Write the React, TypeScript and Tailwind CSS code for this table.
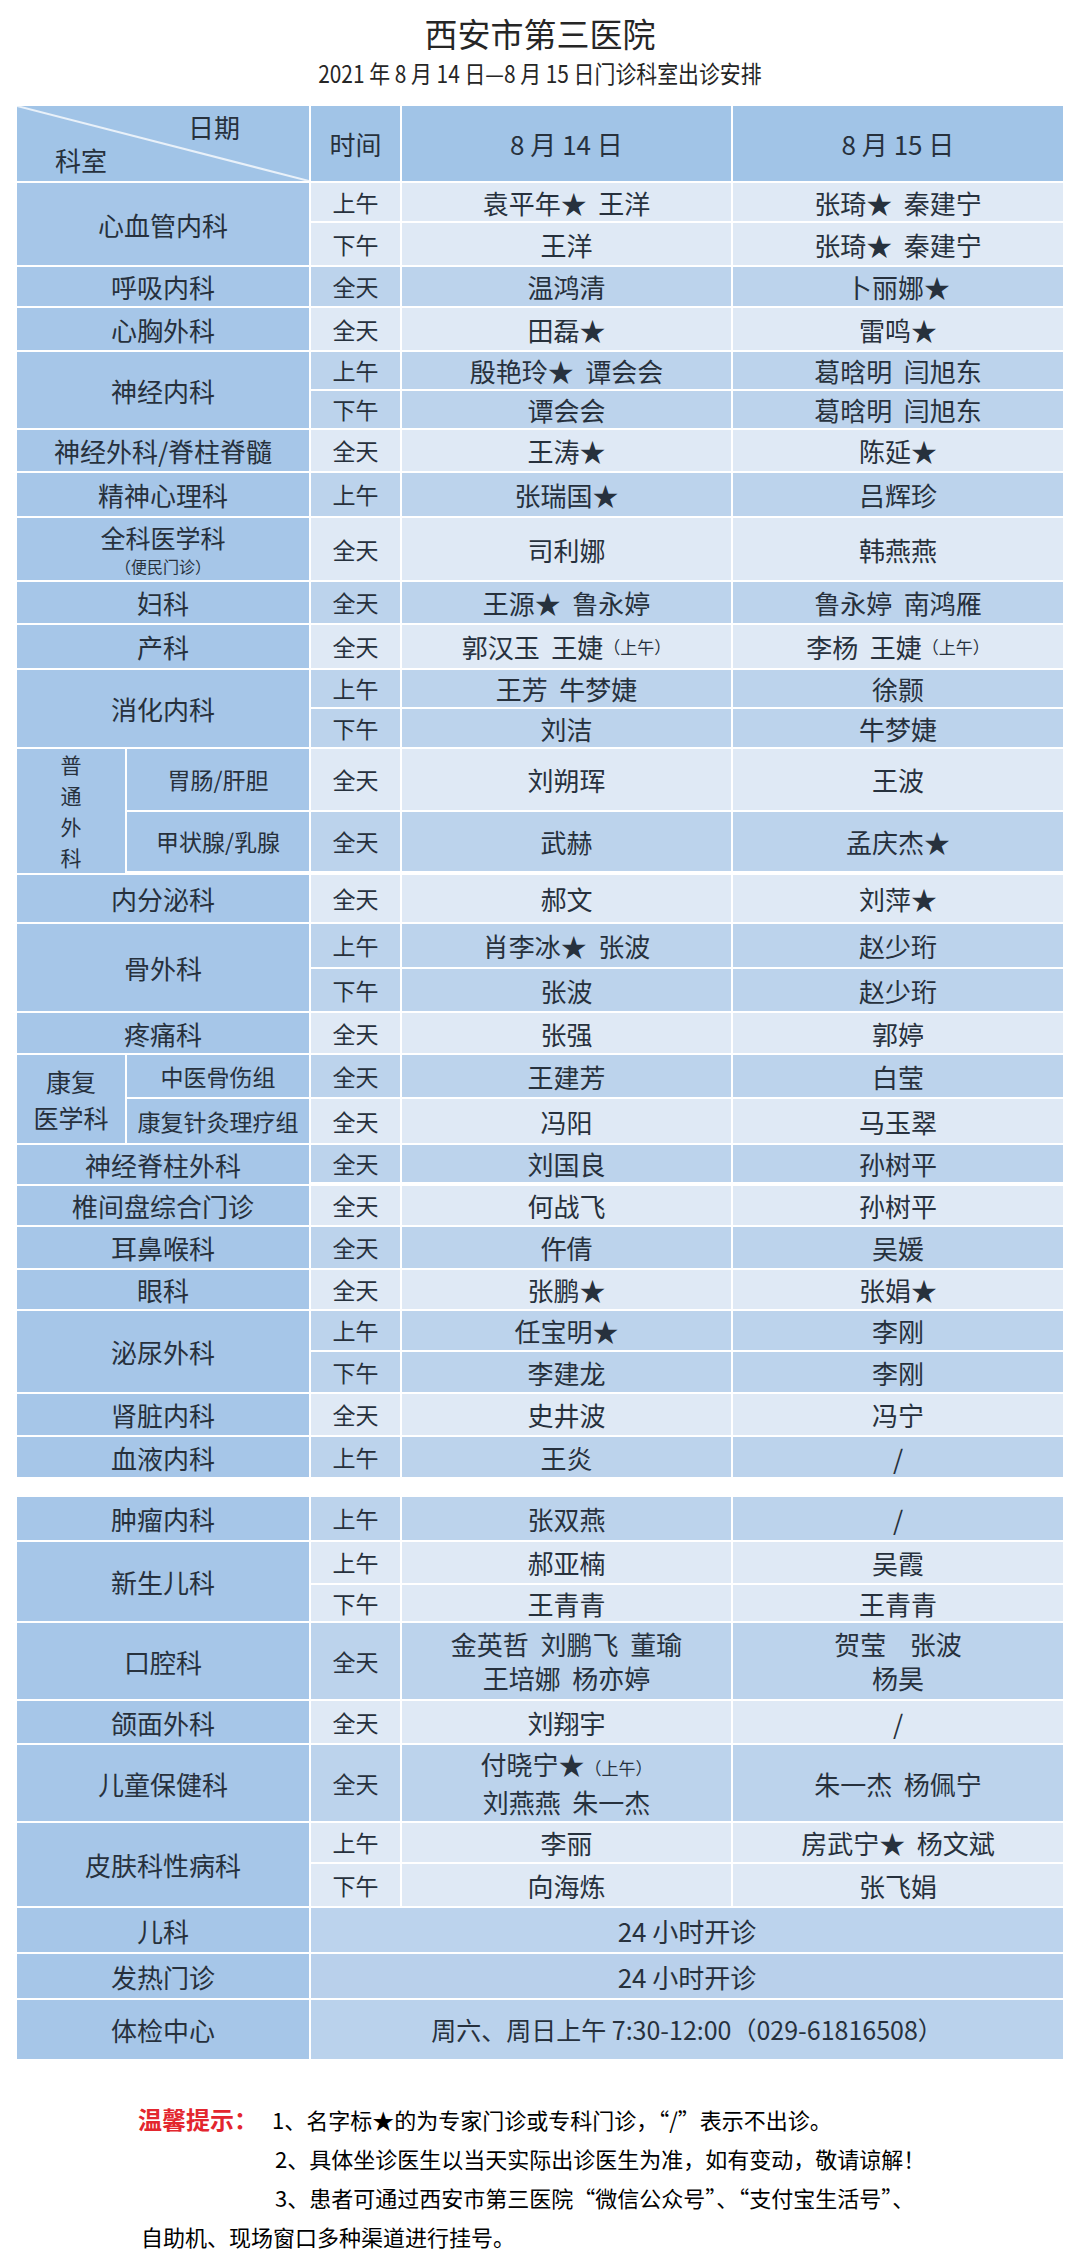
import { ReactNode } from "react";

type Row = {
  t: string;
  a: ReactNode;
  b: ReactNode;
  h: string;
  m: boolean;
  sub?: string;
};

type Block = {
  dept?: ReactNode;
  group?: string[];
  rows: Row[];
};

const LIGHT = "bg-[#dfe9f5]";
const MID = "bg-[#bcd3ec]";
const DEPT = "bg-[#a6c6e8]";

const Small = ({ children }: { children: ReactNode }) => (
  <span className="text-[17px]">{children}</span>
);

const first: Block[] = [
  {
    dept: "心血管内科",
    rows: [
      { t: "上午", a: "袁平年★  王洋", b: "张琦★  秦建宁", h: "h-[38px]", m: false },
      { t: "下午", a: "王洋", b: "张琦★  秦建宁", h: "h-[42px]", m: false },
    ],
  },
  { dept: "呼吸内科", rows: [{ t: "全天", a: "温鸿清", b: "卜丽娜★", h: "h-[39px]", m: true }] },
  { dept: "心胸外科", rows: [{ t: "全天", a: "田磊★", b: "雷鸣★", h: "h-[42px]", m: false }] },
  {
    dept: "神经内科",
    rows: [
      { t: "上午", a: "殷艳玲★  谭会会", b: "葛晗明  闫旭东", h: "h-[37px]", m: true },
      { t: "下午", a: "谭会会", b: "葛晗明  闫旭东", h: "h-[37px]", m: true },
    ],
  },
  { dept: "神经外科/脊柱脊髓", rows: [{ t: "全天", a: "王涛★", b: "陈延★", h: "h-[41px]", m: false }] },
  { dept: "精神心理科", rows: [{ t: "上午", a: "张瑞国★", b: "吕辉珍", h: "h-[43px]", m: true }] },
  {
    dept: (
      <div className="flex flex-col items-center">
        <span className="text-[25px] leading-[33px]">全科医学科</span>
        <span className="text-[16px] leading-[24px]">（便民门诊）</span>
      </div>
    ),
    rows: [{ t: "全天", a: "司利娜", b: "韩燕燕", h: "h-[62px]", m: false }],
  },
  { dept: "妇科", rows: [{ t: "全天", a: "王源★  鲁永婷", b: "鲁永婷  南鸿雁", h: "h-[41px]", m: true }] },
  {
    dept: "产科",
    rows: [
      {
        t: "全天",
        a: (
          <>
            郭汉玉  王婕<Small>（上午）</Small>
          </>
        ),
        b: (
          <>
            李杨  王婕<Small>（上午）</Small>
          </>
        ),
        h: "h-[43px]",
        m: false,
      },
    ],
  },
  {
    dept: "消化内科",
    rows: [
      { t: "上午", a: "王芳  牛梦婕", b: "徐颢", h: "h-[37px]", m: true },
      { t: "下午", a: "刘洁", b: "牛梦婕", h: "h-[38px]", m: true },
    ],
  },
  {
    group: ["普", "通", "外", "科"],
    rows: [
      { sub: "胃肠/肝胆", t: "全天", a: "刘朔珲", b: "王波", h: "h-[61px]", m: false },
      { sub: "甲状腺/乳腺", t: "全天", a: "武赫", b: "孟庆杰★", h: "h-[59px]", m: true },
    ],
  },
  { dept: "内分泌科", rows: [{ t: "全天", a: "郝文", b: "刘萍★", h: "h-[47px]", m: false }] },
  {
    dept: "骨外科",
    rows: [
      { t: "上午", a: "肖李冰★  张波", b: "赵少珩", h: "h-[43px]", m: true },
      { t: "下午", a: "张波", b: "赵少珩", h: "h-[42px]", m: true },
    ],
  },
  { dept: "疼痛科", rows: [{ t: "全天", a: "张强", b: "郭婷", h: "h-[40px]", m: false }] },
  {
    group: ["康复", "医学科"],
    rows: [
      { sub: "中医骨伤组", t: "全天", a: "王建芳", b: "白莹", h: "h-[42px]", m: true },
      { sub: "康复针灸理疗组", t: "全天", a: "冯阳", b: "马玉翠", h: "h-[44px]", m: false },
    ],
  },
  { dept: "神经脊柱外科", rows: [{ t: "全天", a: "刘国良", b: "孙树平", h: "h-[37px]", m: true }] },
  { dept: "椎间盘综合门诊", rows: [{ t: "全天", a: "何战飞", b: "孙树平", h: "h-[39px]", m: false }] },
  { dept: "耳鼻喉科", rows: [{ t: "全天", a: "仵倩", b: "吴媛", h: "h-[41px]", m: true }] },
  { dept: "眼科", rows: [{ t: "全天", a: "张鹏★", b: "张娟★", h: "h-[39px]", m: false }] },
  {
    dept: "泌尿外科",
    rows: [
      { t: "上午", a: "任宝明★", b: "李刚", h: "h-[39px]", m: true },
      { t: "下午", a: "李建龙", b: "李刚", h: "h-[40px]", m: true },
    ],
  },
  { dept: "肾脏内科", rows: [{ t: "全天", a: "史井波", b: "冯宁", h: "h-[41px]", m: false }] },
  { dept: "血液内科", rows: [{ t: "上午", a: "王炎", b: "/", h: "h-[40px]", m: true }] },
];

const second: Block[] = [
  { dept: "肿瘤内科", rows: [{ t: "上午", a: "张双燕", b: "/", h: "h-[43px]", m: true }] },
  {
    dept: "新生儿科",
    rows: [
      { t: "上午", a: "郝亚楠", b: "吴霞", h: "h-[41px]", m: false },
      { t: "下午", a: "王青青", b: "王青青", h: "h-[36px]", m: false },
    ],
  },
  {
    dept: "口腔科",
    rows: [
      {
        t: "全天",
        a: (
          <div className="flex flex-col items-center leading-[34px]">
            <span>金英哲  刘鹏飞  董瑜</span>
            <span>王培娜  杨亦婷</span>
          </div>
        ),
        b: (
          <div className="flex flex-col items-center leading-[34px]">
            <span>贺莹    张波</span>
            <span>杨昊</span>
          </div>
        ),
        h: "h-[76px]",
        m: true,
      },
    ],
  },
  { dept: "颌面外科", rows: [{ t: "全天", a: "刘翔宇", b: "/", h: "h-[42px]", m: false }] },
  {
    dept: "儿童保健科",
    rows: [
      {
        t: "全天",
        a: (
          <div className="flex flex-col items-center leading-[34px]">
            <span>
              付晓宁★<Small>（上午）</Small>
            </span>
            <span>刘燕燕  朱一杰</span>
          </div>
        ),
        b: "朱一杰  杨佩宁",
        h: "h-[76px]",
        m: true,
      },
    ],
  },
  {
    dept: "皮肤科性病科",
    rows: [
      { t: "上午", a: "李丽", b: "房武宁★  杨文斌", h: "h-[39px]", m: false },
      { t: "下午", a: "向海炼", b: "张飞娟", h: "h-[42px]", m: false },
    ],
  },
];

const merged = [
  { dept: "儿科", text: "24 小时开诊", h: "h-[44px]", bg: "bg-[#bcd3ed]", size: "text-[26px]" },
  { dept: "发热门诊", text: "24 小时开诊", h: "h-[44px]", bg: "bg-[#b9d0eb]", size: "text-[26px]" },
  {
    dept: "体检中心",
    text: "周六、周日上午 7:30-12:00（029-61816508）",
    h: "h-[59px]",
    bg: "bg-[#bad2ec]",
    size: "text-[25px]",
  },
];

const TableRow = ({ row }: { row: Row }) => {
  const bg = row.m ? MID : LIGHT;
  return (
    <div className={`flex gap-[2px] ${row.h}`}>
      {row.sub && (
        <div className={`w-[182px] flex items-center justify-center text-[23px] ${DEPT}`}>
          {row.sub}
        </div>
      )}
      <div className={`w-[89px] flex items-center justify-center text-[23px] ${bg}`}>{row.t}</div>
      <div className={`w-[329px] flex items-center justify-center whitespace-pre ${bg}`}>{row.a}</div>
      <div className={`w-[330px] flex items-center justify-center whitespace-pre ${bg}`}>{row.b}</div>
    </div>
  );
};

const BlockView = ({ block }: { block: Block }) => (
  <div className="flex gap-[2px]">
    {block.group ? (
      <div
        className={`w-[108px] flex flex-col items-center justify-center ${
          block.group.length > 2 ? "text-[21px] leading-[31px]" : "text-[25px] leading-[36px]"
        } ${DEPT}`}
      >
        {block.group.map((g) => (
          <span key={g}>{g}</span>
        ))}
      </div>
    ) : (
      <div className={`w-[292px] flex items-center justify-center ${DEPT}`}>{block.dept}</div>
    )}
    <div className="flex flex-col gap-[2px]">
      {block.rows.map((r, i) => (
        <TableRow key={i} row={r} />
      ))}
    </div>
  </div>
);

export default function App() {
  return (
    <div
      className="w-[1080px] min-h-[2268px] bg-white text-[#27313d]"
      style={{ fontFamily: '"Noto Sans CJK SC", "Noto Sans", sans-serif' }}
    >
      <div className="pt-[13px] flex flex-col items-center text-[#262626]">
        <h1 className="text-[33px] leading-[40px] font-normal">西安市第三医院</h1>
        <h2 className="mt-[5px] text-[24px] leading-[30px] font-normal scale-x-[0.87] whitespace-nowrap">
          2021 年 8 月 14 日—8 月 15 日门诊科室出诊安排
        </h2>
      </div>

      <div className="ml-[17px] mt-[18px] w-[1046px] text-[26px]">
        <div className="flex flex-col gap-[2px] bg-white">
          <div className="flex gap-[2px] h-[75px]">
            <div className="relative w-[292px] bg-[#a1c4e7]">
              <svg
                className="absolute inset-0 h-full w-full"
                viewBox="0 0 292 75"
                preserveAspectRatio="none"
              >
                <line x1="0" y1="0" x2="292" y2="75" stroke="#e9f1f9" strokeWidth="2" />
              </svg>
              <span className="absolute left-[171px] top-[3px] leading-[36px]">日期</span>
              <span className="absolute left-[38px] top-[36px] leading-[36px]">科室</span>
            </div>
            <div className="w-[89px] flex items-center justify-center bg-[#a1c4e7]">时间</div>
            <div className="w-[329px] flex items-center justify-center bg-[#a1c4e7] whitespace-pre">
              8 月 14 日
            </div>
            <div className="w-[330px] flex items-center justify-center bg-[#a1c4e7] whitespace-pre">
              8 月 15 日
            </div>
          </div>
          {first.map((b, i) => (
            <BlockView key={i} block={b} />
          ))}
        </div>

        <div className="mt-[20px] flex flex-col gap-[2px] bg-white">
          {second.map((b, i) => (
            <BlockView key={i} block={b} />
          ))}
          {merged.map((m) => (
            <div key={m.dept} className={`flex gap-[2px] ${m.h}`}>
              <div className={`w-[292px] flex items-center justify-center ${DEPT}`}>{m.dept}</div>
              <div className={`w-[752px] flex items-center justify-center ${m.bg} ${m.size}`}>
                {m.text}
              </div>
            </div>
          ))}
        </div>
      </div>

      <div className="mt-[40px] pl-[138px] text-[22px] leading-[39px] text-black">
        <p>
          <span className="inline-block w-[134px] text-[24px] font-bold text-[#e3262e]">温馨提示：</span>
          1、名字标★的为专家门诊或专科门诊，“/”表示不出诊。
        </p>
        <p className="pl-[137px]">2、具体坐诊医生以当天实际出诊医生为准，如有变动，敬请谅解！</p>
        <p className="pl-[137px]">3、患者可通过西安市第三医院“微信公众号”、“支付宝生活号”、</p>
        <p className="pl-[3px]">自助机、现场窗口多种渠道进行挂号。</p>
      </div>
    </div>
  );
}
